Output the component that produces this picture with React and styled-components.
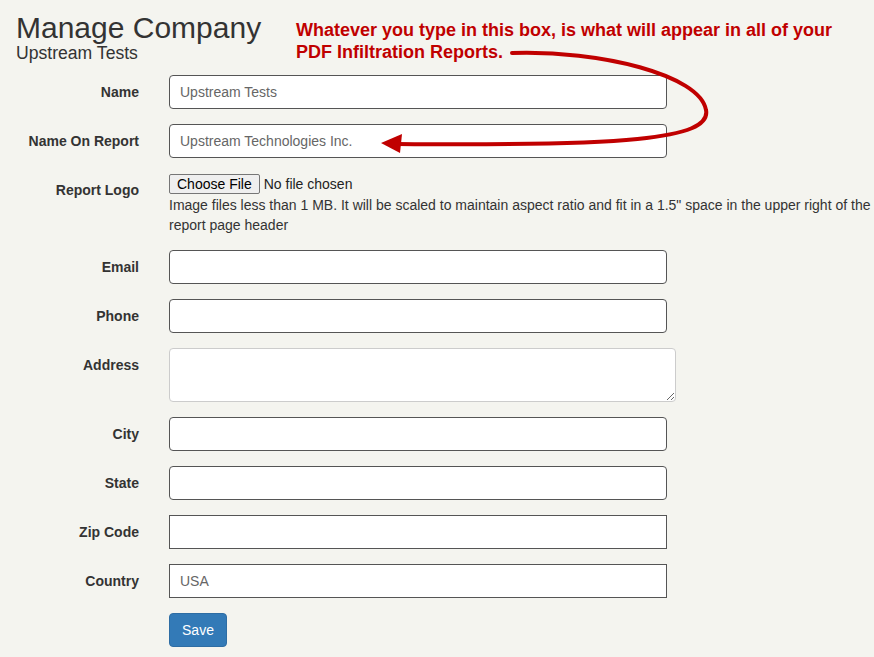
import React from 'react'
import styled, { createGlobalStyle } from 'styled-components'

const GlobalStyle = createGlobalStyle`
html, body {
  margin: 0;
  padding: 0;
  background: #f4f4ef;
  font-family: "Liberation Sans", Arial, sans-serif;
  font-size: 14px;
  color: #333;
}
* { box-sizing: border-box; }
`

const Page = styled.div`
position: relative;
width: 874px;
min-height: 657px;
padding-top: 11px;
`

const Header = styled.div`
padding-left: 16px;
margin-bottom: 13px;
`

const Title = styled.h1`
margin: 0;
font-size: 30px;
font-weight: 400;
line-height: 33px;
color: #333;
`

const Subtitle = styled.h2`
margin: 0;
font-size: 17.6px;
font-weight: 400;
line-height: 18px;
color: #333;
`

const Note = styled.div`
position: absolute;
left: 296px;
top: 20px;
color: #c00000;
font-weight: 700;
font-size: 18px;
line-height: 21.5px;
`

const Arrow = styled.svg`
position: absolute;
left: 0;
top: 0;
pointer-events: none;
`

const Form = styled.form`
display: flex;
flex-direction: column;
`

const Row = styled.div`
display: grid;
grid-template-columns: 154px 1fr;
margin-bottom: 15px;
`

const Label = styled.label`
text-align: right;
padding: 7px 15px 0 0;
font-weight: 700;
line-height: 20px;
`

const Field = styled.div`
padding-left: 15px;
`

const Input = styled.input`
display: block;
width: 498px;
height: 34px;
padding: 6px 10px;
border: 1px solid #555;
border-radius: ${({ square }) => (square ? '0' : '4px')};
background: #fff;
font-family: inherit;
font-size: 14px;
color: #666;
outline: none;
`

const TextArea = styled.textarea`
display: block;
width: 507px;
height: 54px;
padding: 6px 10px;
border: 1px solid #ccc;
border-radius: 4px;
background: #fff;
font-family: inherit;
font-size: 14px;
color: #555;
`

const FileLine = styled.div`
display: flex;
align-items: center;
height: 22px;
`

const FileButton = styled.button`
height: 20px;
padding: 0 7px;
border: 1px solid #767676;
border-radius: 2px;
background: #efefef;
font-family: inherit;
font-size: 14px;
color: #000;
margin-right: 4px;
`

const FileStatus = styled.span`
font-size: 14px;
color: #222;
`

const Help = styled.p`
margin: 0;
line-height: 20px;
font-size: 14px;
color: #333;
`

const SaveButton = styled.button`
width: 58px;
height: 34px;
border: 1px solid #2e6da4;
border-radius: 4px;
background: #337ab7;
color: #fff;
font-family: inherit;
font-size: 14px;
`

const fields = [
  { label: 'Email' },
  { label: 'Phone' },
]

const lower = [
  { label: 'City' },
  { label: 'State' },
  { label: 'Zip Code', square: true },
  { label: 'Country', value: 'USA', square: true },
]

const App = () => {
  return (
    <Page>
      <GlobalStyle />
      <Header>
        <Title>Manage Company</Title>
        <Subtitle>Upstream Tests</Subtitle>
      </Header>

      <Note>
        Whatever you type in this box, is what will appear in all of your
        <br />
        PDF Infiltration Reports.
      </Note>

      <Form>
        <Row>
          <Label>Name</Label>
          <Field><Input defaultValue="Upstream Tests" /></Field>
        </Row>
        <Row>
          <Label>Name On Report</Label>
          <Field><Input defaultValue="Upstream Technologies Inc." /></Field>
        </Row>
        <Row>
          <Label>Report Logo</Label>
          <Field>
            <FileLine>
              <FileButton type="button">Choose File</FileButton>
              <FileStatus>No file chosen</FileStatus>
            </FileLine>
            <Help>
              Image files less than 1 MB. It will be scaled to maintain aspect ratio and fit in a 1.5" space in the upper right of the report page header
            </Help>
          </Field>
        </Row>
        {fields.map((f) => (
          <Row key={f.label}>
            <Label>{f.label}</Label>
            <Field><Input /></Field>
          </Row>
        ))}
        <Row>
          <Label>Address</Label>
          <Field><TextArea /></Field>
        </Row>
        {lower.map((f) => (
          <Row key={f.label}>
            <Label>{f.label}</Label>
            <Field><Input square={f.square} defaultValue={f.value} /></Field>
          </Row>
        ))}
        <Row>
          <span />
          <Field><SaveButton type="button">Save</SaveButton></Field>
        </Row>
      </Form>

      <Arrow width="874" height="657" viewBox="0 0 874 657">
        <path
          d="M512 53 C 600 50, 700 75, 706 110 C 712 140, 620 146, 398 144"
          fill="none"
          stroke="#c00000"
          strokeWidth="4"
          strokeLinecap="round"
        />
        <polygon points="381,143 402,134 400,153" fill="#c00000" />
      </Arrow>
    </Page>
  )
}

export default App
